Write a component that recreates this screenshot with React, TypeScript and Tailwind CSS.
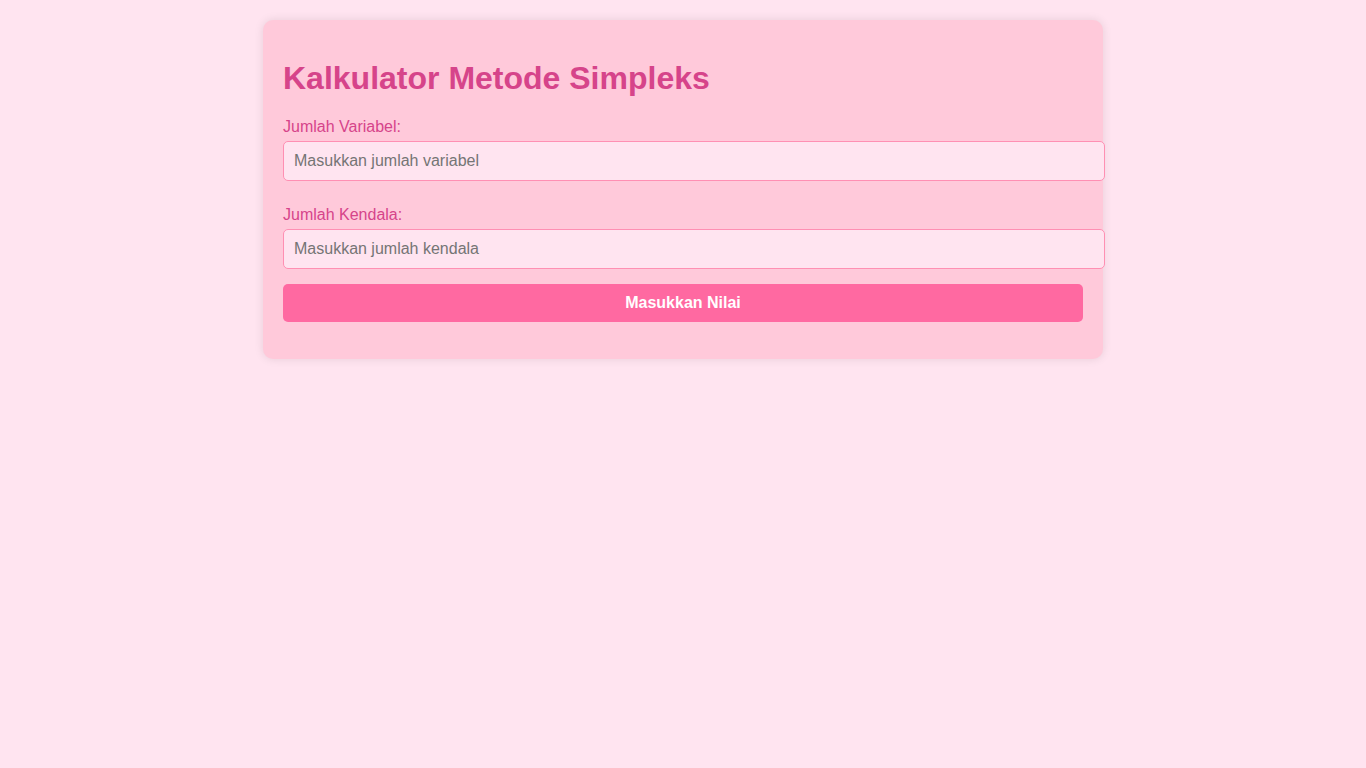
import React, { useState } from 'react';

const App = () => {
  const [variabel, setVariabel] = useState('');
  const [kendala, setKendala] = useState('');

  return (
    <div className="min-h-screen w-full bg-[#ffe4f0] pt-5 font-['Liberation_Sans',Arial,sans-serif]">
      <div className="mx-auto w-[840px] rounded-[10px] bg-[#ffc9da] p-5 shadow-[0_0_10px_rgba(0,0,0,0.1)]">
        <h1 className="mt-[20px] mb-[21px] text-[32px] font-bold leading-[37px] text-[#d6448a]">
          Kalkulator Metode Simpleks
        </h1>

        <label className="mb-[5px] block text-base leading-[18px] text-[#d6448a]">Jumlah Variabel:</label>
        <input
          type="number"
          placeholder="Masukkan jumlah variabel"
          value={variabel}
          onChange={(e) => setVariabel(e.target.value)}
          className="mb-[25px] box-content block h-[18px] w-full rounded-[5px] border border-[#ff8fb3] bg-[#ffe4f0] p-[10px] text-base leading-[18px] text-[#333] placeholder-[#757575] outline-none"
        />

        <label className="mb-[5px] block text-base leading-[18px] text-[#d6448a]">Jumlah Kendala:</label>
        <input
          type="number"
          placeholder="Masukkan jumlah kendala"
          value={kendala}
          onChange={(e) => setKendala(e.target.value)}
          className="mb-[15px] box-content block h-[18px] w-full rounded-[5px] border border-[#ff8fb3] bg-[#ffe4f0] p-[10px] text-base leading-[18px] text-[#333] placeholder-[#757575] outline-none"
        />

        <button
          type="button"
          className="mb-[17px] block h-[38px] w-full rounded-[5px] bg-[#ff69a1] text-base font-bold text-white"
        >
          Masukkan Nilai
        </button>
      </div>
    </div>
  );
};

export default App;
